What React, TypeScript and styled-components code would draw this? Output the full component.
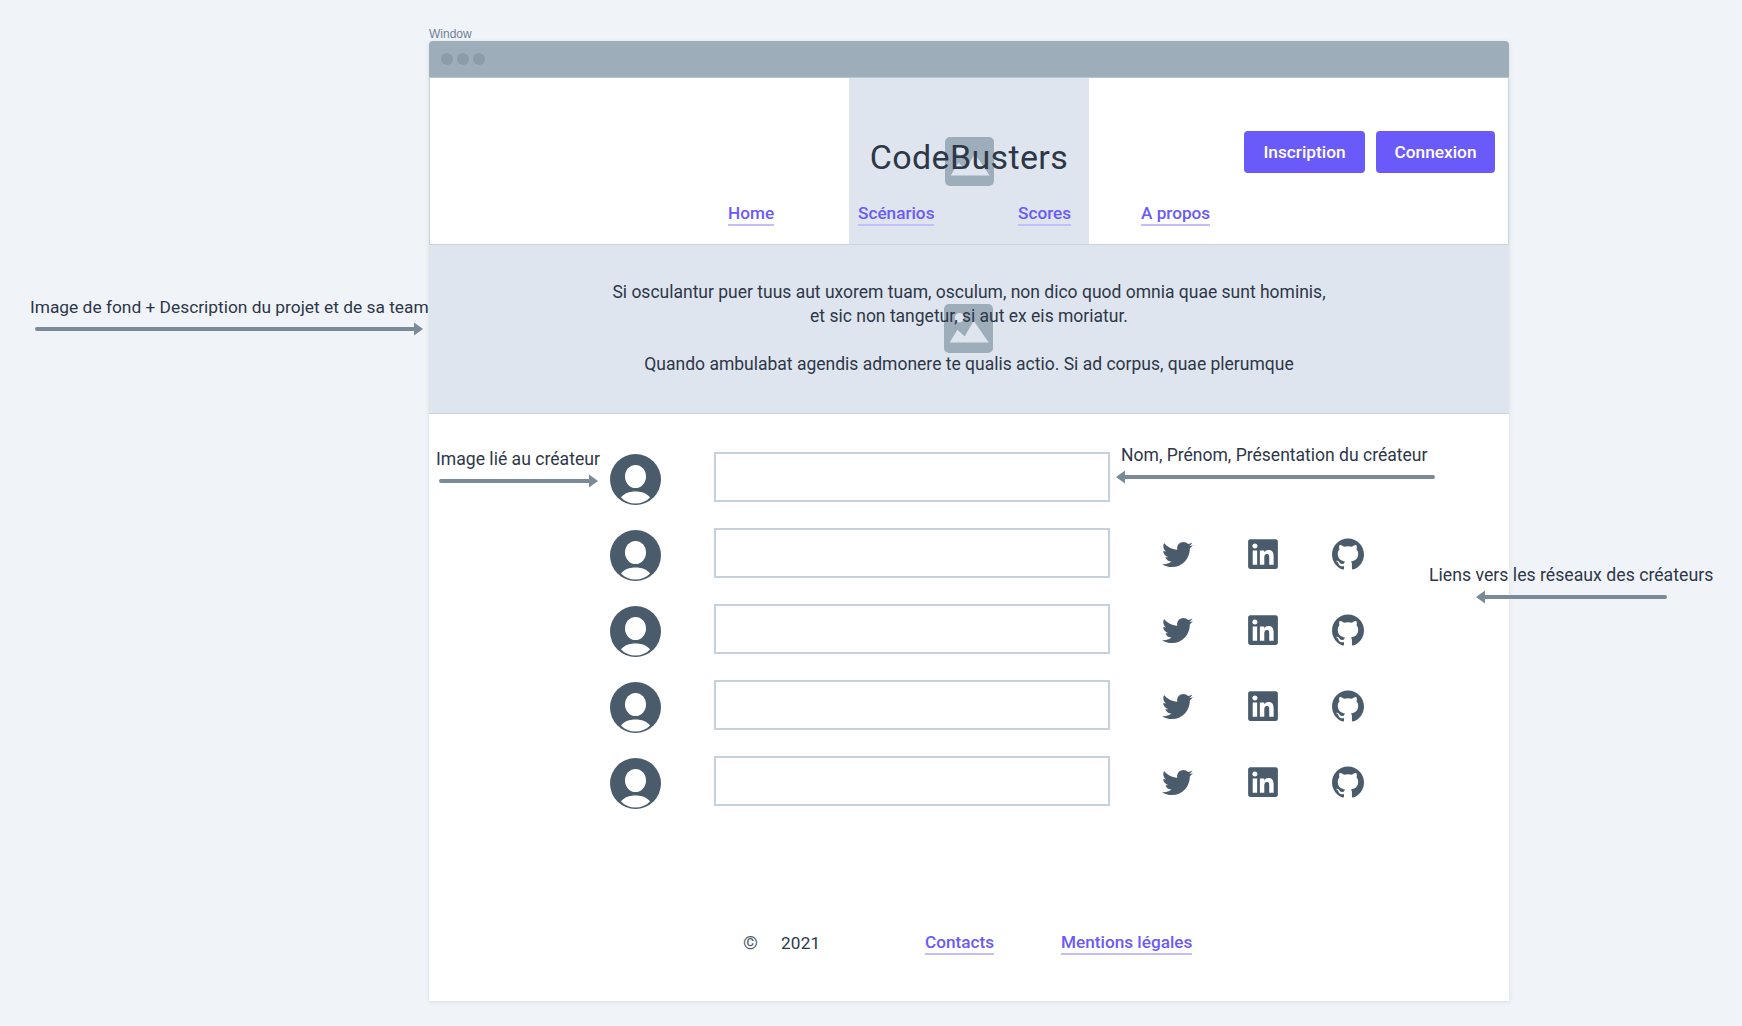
import styled, { createGlobalStyle } from "styled-components";
import { FaTwitter, FaLinkedin } from "react-icons/fa";
import { SiGithub } from "react-icons/si";

const GlobalStyle = createGlobalStyle`
  html, body {
    margin: 0;
    padding: 0;
    background: #f0f4f8;
  }
  * {
    box-sizing: border-box;
  }
`;

const Page = styled.div`
  position: relative;
  width: 1742px;
  height: 1026px;
  overflow: hidden;
  padding: 27px 0 0 429px;
  background: #f0f4f8;
  color: #2d3748;
  font-family: Roboto, "Liberation Sans", sans-serif;
`;

const WindowLabel = styled.div`
  height: 14px;
  font-family: "Liberation Sans", sans-serif;
  font-size: 12px;
  line-height: 14px;
  color: #718096;
`;

const Frame = styled.div`
  width: 1080px;
  height: 960px;
  background: #fff;
  display: flex;
  flex-direction: column;
  box-shadow: 0 1px 4px rgba(74, 92, 108, 0.15);
  border-radius: 4px 4px 0 0;
`;

const TitleBar = styled.div`
  flex: 0 0 36px;
  display: flex;
  align-items: center;
  gap: 4px;
  padding-left: 12px;
  background: #9eadba;
  border-radius: 4px 4px 0 0;
`;

const Dot = styled.span`
  width: 12px;
  height: 12px;
  border-radius: 50%;
  background: #8b9caa;
`;

const Header = styled.header`
  position: relative;
  flex: 0 0 168px;
  border: 1px solid #cbd5e0;
  border-top-color: #b9c5d2;
  background: #fff;
`;

const LogoBackdrop = styled.div`
  position: absolute;
  top: 0;
  bottom: 0;
  left: 419px;
  width: 240px;
  display: flex;
  align-items: center;
  justify-content: center;
  background: #dfe5ee;
`;

const ImageBadge = styled.svg`
  width: 49px;
  height: 49px;
  display: block;
`;

const TopRow = styled.div`
  position: relative;
  height: 125px;
  display: flex;
  align-items: flex-start;
  justify-content: flex-end;
  gap: 11px;
  padding: 53px 13px 0 0;
`;

const Title = styled.h1`
  position: absolute;
  top: 56px;
  left: 0;
  right: 0;
  margin: 0;
  text-align: center;
  font-size: 34px;
  line-height: 46px;
  font-weight: 400;
  letter-spacing: 0.35px;
  color: #2d3748;
`;

const Button = styled.button<{ $width: number }>`
  position: relative;
  width: ${(p) => p.$width}px;
  height: 42px;
  border: none;
  border-radius: 4px;
  background: #6a5af9;
  color: #fff;
  font-family: inherit;
  font-size: 17.3px;
  font-weight: 500;
`;

const NavRow = styled.nav`
  position: relative;
  display: grid;
  grid-template-columns: 130px 160px 123px auto;
  padding-left: 298px;
`;

const TextLink = styled.a`
  justify-self: start;
  color: #6a5af9;
  font-size: 17.2px;
  font-weight: 500;
  line-height: 21px;
  text-decoration: none;
  border-bottom: 2px solid #c3bdfc;
`;

const FooterLink = styled(TextLink)`
  margin-top: 2px;
`;

const Hero = styled.section`
  position: relative;
  flex: 0 0 169px;
  padding-top: 35px;
  background: #dfe5ee;
  border-bottom: 1px solid #cbd5e0;
  text-align: center;
`;

const HeroBadge = styled.div`
  position: absolute;
  top: 59px;
  left: 515px;
`;

const HeroText = styled.p`
  position: relative;
  margin: 0;
  font-size: 17.5px;
  line-height: 24px;
  color: #2d3748;
`;

const Creators = styled.section`
  flex: 0 0 516px;
  display: flex;
  flex-direction: column;
  gap: 26px;
  padding: 38px 0 0 181px;
`;

const CreatorRow = styled.div`
  display: flex;
  align-items: flex-start;
  height: 50px;
`;

const Avatar = styled.svg`
  flex: 0 0 51px;
  width: 51px;
  height: 51px;
  margin-top: 2px;
`;

const Field = styled.div`
  width: 396px;
  height: 50px;
  margin-left: 53px;
  border: 2px solid #c5d1dc;
  background: #fff;
`;

const Socials = styled.div`
  display: grid;
  grid-template-columns: 84px 86px 32px;
  align-items: center;
  height: 32px;
  margin: 9px 0 0 52px;
  color: #4a5c6c;

  svg {
    display: block;
  }
`;

const Footer = styled.footer`
  display: grid;
  grid-template-columns: 38px 144px 136px auto;
  align-items: center;
  padding: 0 0 0 314px;
`;

const Copyright = styled.span`
  font-size: 19px;
  font-weight: 500;
  line-height: 22px;
  color: #4a5c6c;
`;

const Year = styled.span`
  font-size: 17.2px;
  line-height: 22px;
  letter-spacing: 0.2px;
`;

const Note = styled.div<{ $x: number; $y: number; $size: number }>`
  position: absolute;
  left: ${(p) => p.$x}px;
  top: ${(p) => p.$y}px;
  font-size: ${(p) => p.$size}px;
  line-height: 20px;
  white-space: nowrap;
  color: #2d3748;
`;

const ArrowSvg = styled.svg<{ $x: number; $y: number }>`
  position: absolute;
  left: ${(p) => p.$x}px;
  top: ${(p) => p.$y}px;
`;

function Arrow({ x, y, width, left }: { x: number; y: number; width: number; left?: boolean }) {
  return (
    <ArrowSvg $x={x} $y={y - 7} width={width} height={14} viewBox={`0 0 ${width} 14`}>
      <g transform={left ? `translate(${width} 0) scale(-1 1)` : undefined} fill="#7a8a99">
        <rect x={0} y={5} width={width - 6} height={4} rx={2} />
        <path d={`M${width - 9} 0.5 L${width} 7 L${width - 9} 13.5 Z`} />
      </g>
    </ArrowSvg>
  );
}

function PictureIcon() {
  return (
    <ImageBadge viewBox="0 0 49 49">
      <rect width="49" height="49" rx="5" fill="#9eadba" />
      <circle cx="15.5" cy="13.7" r="4.7" fill="#dfe5ee" />
      <path d="M5.7 38.4 L13.4 25.7 L20.7 32.4 L29.7 16.7 L44.7 38.4 Z" fill="#dfe5ee" />
    </ImageBadge>
  );
}

function UserPicture() {
  return (
    <Avatar viewBox="0 0 51 51">
      <circle cx="25.5" cy="25.5" r="25.5" fill="#4a5c6c" />
      <ellipse cx="25.5" cy="22.5" rx="10.5" ry="11.5" fill="#fff" />
      <path
        d="M11 43.5C14 39.5 19 37.5 25.5 37.5C32 37.5 37 39.5 40 43.5C36 47.5 31 49.5 25.5 49.5C20 49.5 15 47.5 11 43.5Z"
        fill="#fff"
      />
    </Avatar>
  );
}

const creators = [false, true, true, true, true];

export default function App() {
  return (
    <Page>
      <GlobalStyle />
      <WindowLabel>Window</WindowLabel>
      <Frame>
        <TitleBar>
          <Dot />
          <Dot />
          <Dot />
        </TitleBar>
        <Header>
          <LogoBackdrop>
            <PictureIcon />
          </LogoBackdrop>
          <TopRow>
            <Title>CodeBusters</Title>
            <Button $width={121}>Inscription</Button>
            <Button $width={119}>Connexion</Button>
          </TopRow>
          <NavRow>
            <TextLink href="#">Home</TextLink>
            <TextLink href="#">Scénarios</TextLink>
            <TextLink href="#">Scores</TextLink>
            <TextLink href="#">A propos</TextLink>
          </NavRow>
        </Header>
        <Hero>
          <HeroBadge>
            <PictureIcon />
          </HeroBadge>
          <HeroText>
            Si osculantur puer tuus aut uxorem tuam, osculum, non dico quod omnia quae sunt hominis,
            <br />
            et sic non tangetur, si aut ex eis moriatur.
            <br />
            <br />
            Quando ambulabat agendis admonere te qualis actio. Si ad corpus, quae plerumque
          </HeroText>
        </Hero>
        <Creators>
          {creators.map((hasLinks, index) => (
            <CreatorRow key={index}>
              <UserPicture />
              <Field />
              {hasLinks && (
                <Socials>
                  <FaTwitter size={31} />
                  <FaLinkedin size={34} />
                  <SiGithub size={32} />
                </Socials>
              )}
            </CreatorRow>
          ))}
        </Creators>
        <Footer>
          <Copyright>©</Copyright>
          <Year>2021</Year>
          <FooterLink href="#">Contacts</FooterLink>
          <FooterLink href="#">Mentions légales</FooterLink>
        </Footer>
      </Frame>

      <Note $x={30} $y={297} $size={17.35}>Image de fond + Description du projet et de sa team</Note>
      <Arrow x={35} y={329} width={388} />
      <Note $x={436} $y={449} $size={17.6}>Image lié au créateur</Note>
      <Arrow x={439} y={481} width={159} />
      <Note $x={1121} $y={445} $size={17.55}>Nom, Prénom, Présentation du créateur</Note>
      <Arrow x={1116} y={477} width={319} left />
      <Note $x={1429} $y={565} $size={17.7}>Liens vers les réseaux des créateurs</Note>
      <Arrow x={1476} y={597} width={191} left />
    </Page>
  );
}
